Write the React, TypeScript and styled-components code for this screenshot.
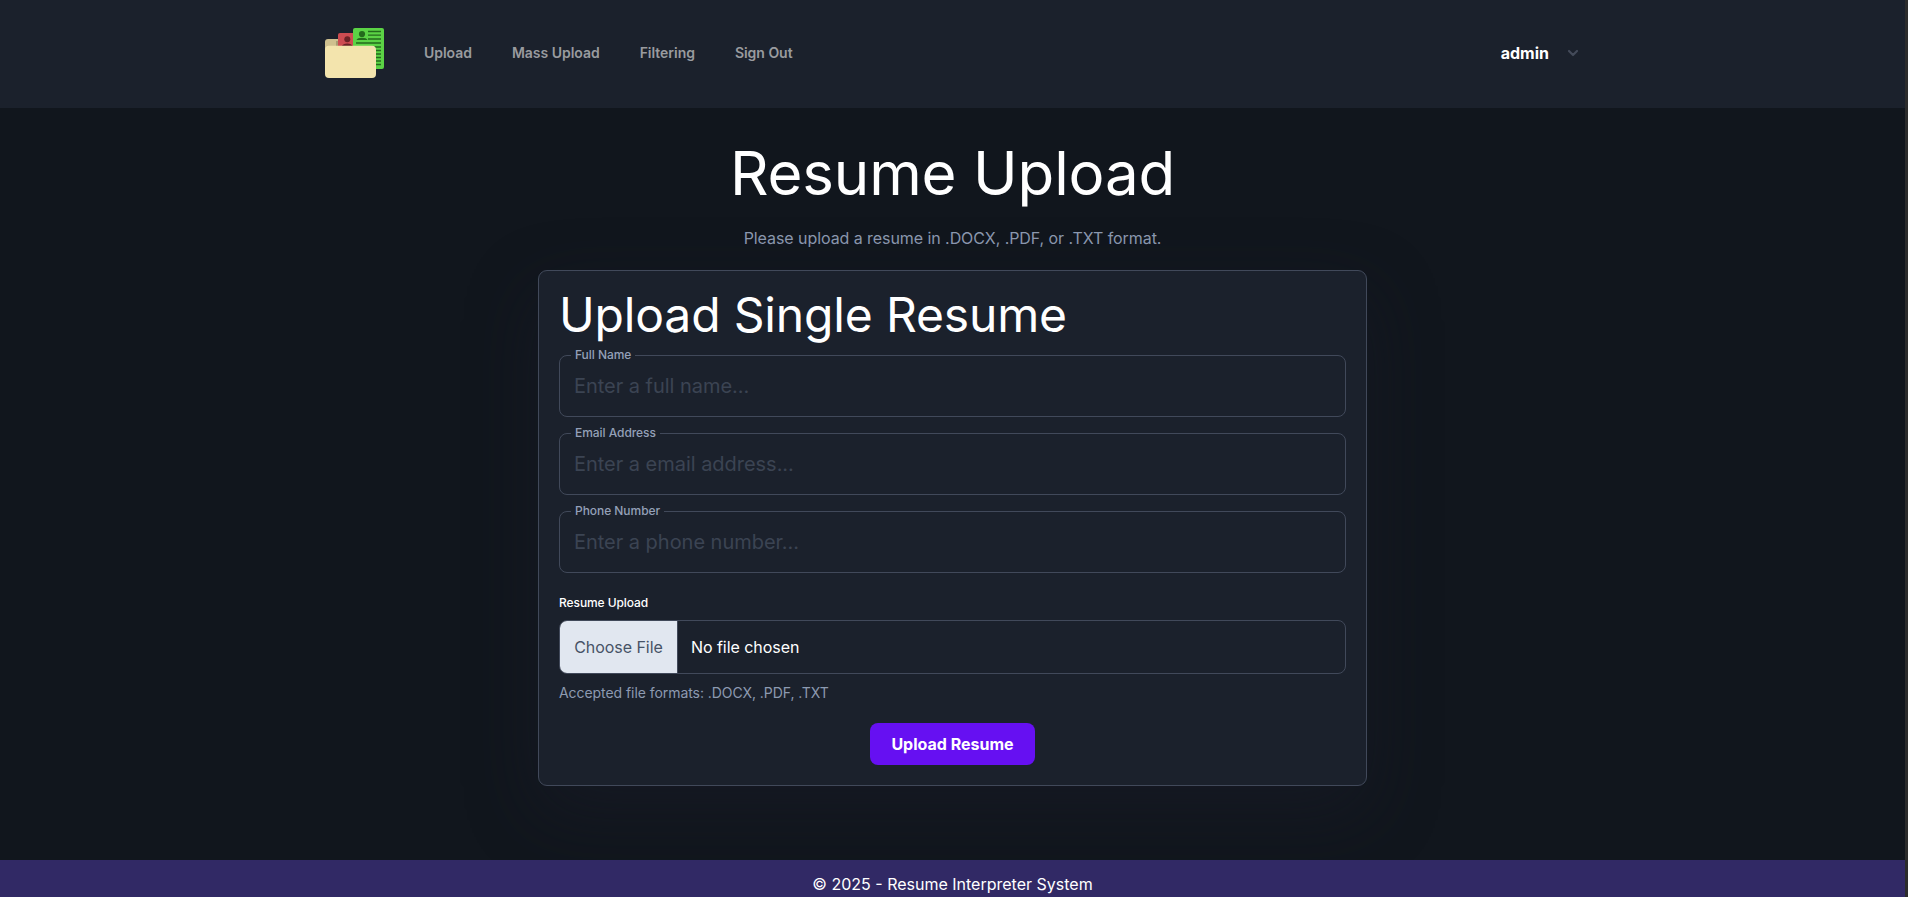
import React from "react";
import styled, { createGlobalStyle } from "styled-components";

const GlobalStyle = createGlobalStyle`
  *, *::before, *::after { box-sizing: border-box; }
  html, body { margin: 0; padding: 0; height: 100%; overflow: hidden; background: #11161d; }
  body { font-family: Inter, "Liberation Sans", sans-serif; font-size: 16px; line-height: 24px; color: #fff; }
`;

const Page = styled.div`
  height: 100vh;
  display: flex;
  flex-direction: column;
  overflow: hidden;
  border-right: 3px solid #2c2c2c;
`;

const Header = styled.header`
  height: 108px;
  flex: none;
  display: flex;
  align-items: center;
  justify-content: space-between;
  padding: 0 324px 2px 325px;
  background: #1b212c;
`;

const HeaderGroup = styled.div`
  display: flex;
  align-items: center;
`;

const Logo = styled.svg`
  display: block;
  width: 60px;
  height: 52px;
  margin-bottom: 2px;
`;

const Nav = styled.nav`
  display: flex;
  gap: 40px;
  margin-left: 39px;
`;

const NavLink = styled.a`
  font-size: 14px;
  line-height: 20px;
  font-weight: 600;
  letter-spacing: -0.03px;
  color: #999b9f;
`;

const UserMenu = styled.div`
  display: flex;
  align-items: center;
  gap: 16px;
  font-weight: 700;
`;

const Main = styled.main`
  height: 752px;
  flex: none;
  display: flex;
  flex-direction: column;
  align-items: center;
`;

const Title = styled.h1`
  margin: 35px 0 0;
  font-size: 60px;
  line-height: 60px;
  font-weight: 400;
  letter-spacing: -0.17px;
`;

const Subtitle = styled.p`
  margin: 23px 0 20px;
  color: #8d9ab1;
  letter-spacing: -0.065px;
`;

const Card = styled.section`
  width: 829px;
  height: 516px;
  padding: 20px;
  display: flex;
  flex-direction: column;
  background: #1b212c;
  border: 1px solid #41495a;
  border-radius: 9px;
  box-shadow: 0 25px 70px rgba(26, 29, 42, 0.45);
`;

const CardTitle = styled.h2`
  margin: 0;
  font-size: 48px;
  line-height: 48px;
  font-weight: 400;
  letter-spacing: -0.16px;
`;

const Fields = styled.div`
  display: flex;
  flex-direction: column;
  gap: 16px;
  margin-top: 16px;
`;

const Field = styled.label`
  position: relative;
  display: flex;
  align-items: center;
  height: 62px;
  padding: 0 14px;
  border: 1px solid #41495a;
  border-radius: 8px;
`;

const FieldLabel = styled.span`
  position: absolute;
  top: -9px;
  left: 11px;
  padding: 0 4px;
  font-size: 12px;
  line-height: 16px;
  font-weight: 500;
  letter-spacing: -0.05px;
  color: #94a0b8;
  background: #1b212c;
`;

const FieldInput = styled.input`
  width: 100%;
  padding: 0;
  border: 0;
  outline: 0;
  background: transparent;
  color: #fff;
  font: 400 20px/28px Inter, "Liberation Sans", sans-serif;
  letter-spacing: -0.03px;
  &::placeholder { color: #3b4453; opacity: 1; }
`;

const FileLabel = styled.span`
  margin-top: 22px;
  font-size: 12px;
  line-height: 16px;
  font-weight: 500;
  letter-spacing: -0.08px;
`;

const FilePicker = styled.div`
  display: flex;
  height: 54px;
  margin-top: 9px;
  border: 1px solid #41495a;
  border-radius: 8px;
  overflow: hidden;
  letter-spacing: -0.05px;
`;

const ChooseButton = styled.span`
  display: flex;
  align-items: center;
  justify-content: center;
  width: 118px;
  color: #475366;
  background: #e1e7f0;
  border-right: 1px solid #41495a;
`;

const FileName = styled.span`
  display: flex;
  align-items: center;
  padding-left: 13px;
`;

const Hint = styled.p`
  margin: 9px 0 0;
  font-size: 14px;
  line-height: 20px;
  color: #8d9ab1;
  letter-spacing: -0.06px;
`;

const SubmitButton = styled.button`
  width: 165px;
  height: 42px;
  margin-top: 20px;
  padding: 0;
  align-self: center;
  border: 0;
  border-radius: 8px;
  background: #6610f2;
  color: #fff;
  font: 700 16px/24px Inter, "Liberation Sans", sans-serif;
`;

const Footer = styled.footer`
  flex: 1;
  padding-top: 12px;
  text-align: center;
  background: #312965;
`;

const links = ["Upload", "Mass Upload", "Filtering", "Sign Out"];
const fields = [
  { label: "Full Name", hint: "Enter a full name..." },
  { label: "Email Address", hint: "Enter a email address..." },
  { label: "Phone Number", hint: "Enter a phone number..." },
];

function FolderLogo() {
  return (
    <Logo viewBox="0 0 60 52">
      <rect y="13" width="30" height="20" rx="3" fill="#cfc08f" />
      <path d="M11 15h4v7h-4z" fill="#a89c74" />
      <rect x="13" y="7" width="28" height="34" rx="2" fill="#cd4c51" />
      <circle cx="22.3" cy="13.2" r="3" fill="#6d2226" />
      <path d="M17 20q1-2.500 5.300-2.500T27.500 20z" fill="#6d2226" />
      <rect x="28" y="2" width="31" height="41" rx="2" fill="#5bd345" />
      <circle cx="37" cy="8" r="3.100" fill="#246b1c" />
      <path d="M31.500 14q1-2.300 5.500-2.300T42.500 14z" fill="#246b1c" />
      <path
        d="M43 5.500h13M43 9.200h13M43 13h13M31 17h25M31 21h25M31 24.500h25M31 28h25M31 31.500h25M31 35h25M31 38.500h25"
        stroke="#246b1c"
        strokeWidth="1.300"
      />
      <rect y="19.700" width="51" height="32.300" rx="4" fill="#f3e4ad" />
    </Logo>
  );
}

export default function App() {
  return (
    <Page>
      <GlobalStyle />
      <Header>
        <HeaderGroup>
          <FolderLogo />
          <Nav>
            {links.map((l) => (
              <NavLink key={l}>{l}</NavLink>
            ))}
          </Nav>
        </HeaderGroup>
        <UserMenu>
          admin
          <svg width="16" height="16" viewBox="0 0 16 16" fill="none" stroke="#434a59" strokeWidth="2.200" strokeLinecap="round" strokeLinejoin="round">
            <path d="M4 6l4 4 4-4" />
          </svg>
        </UserMenu>
      </Header>
      <Main>
        <Title>Resume Upload</Title>
        <Subtitle>Please upload a resume in .DOCX, .PDF, or .TXT format.</Subtitle>
        <Card>
          <CardTitle>Upload Single Resume</CardTitle>
          <Fields>
            {fields.map((f) => (
              <Field key={f.label}>
                <FieldLabel>{f.label}</FieldLabel>
                <FieldInput placeholder={f.hint} />
              </Field>
            ))}
          </Fields>
          <FileLabel>Resume Upload</FileLabel>
          <FilePicker>
            <ChooseButton>Choose File</ChooseButton>
            <FileName>No file chosen</FileName>
          </FilePicker>
          <Hint>Accepted file formats: .DOCX, .PDF, .TXT</Hint>
          <SubmitButton>Upload Resume</SubmitButton>
        </Card>
      </Main>
      <Footer>© 2025 - Resume Interpreter System</Footer>
    </Page>
  );
}
